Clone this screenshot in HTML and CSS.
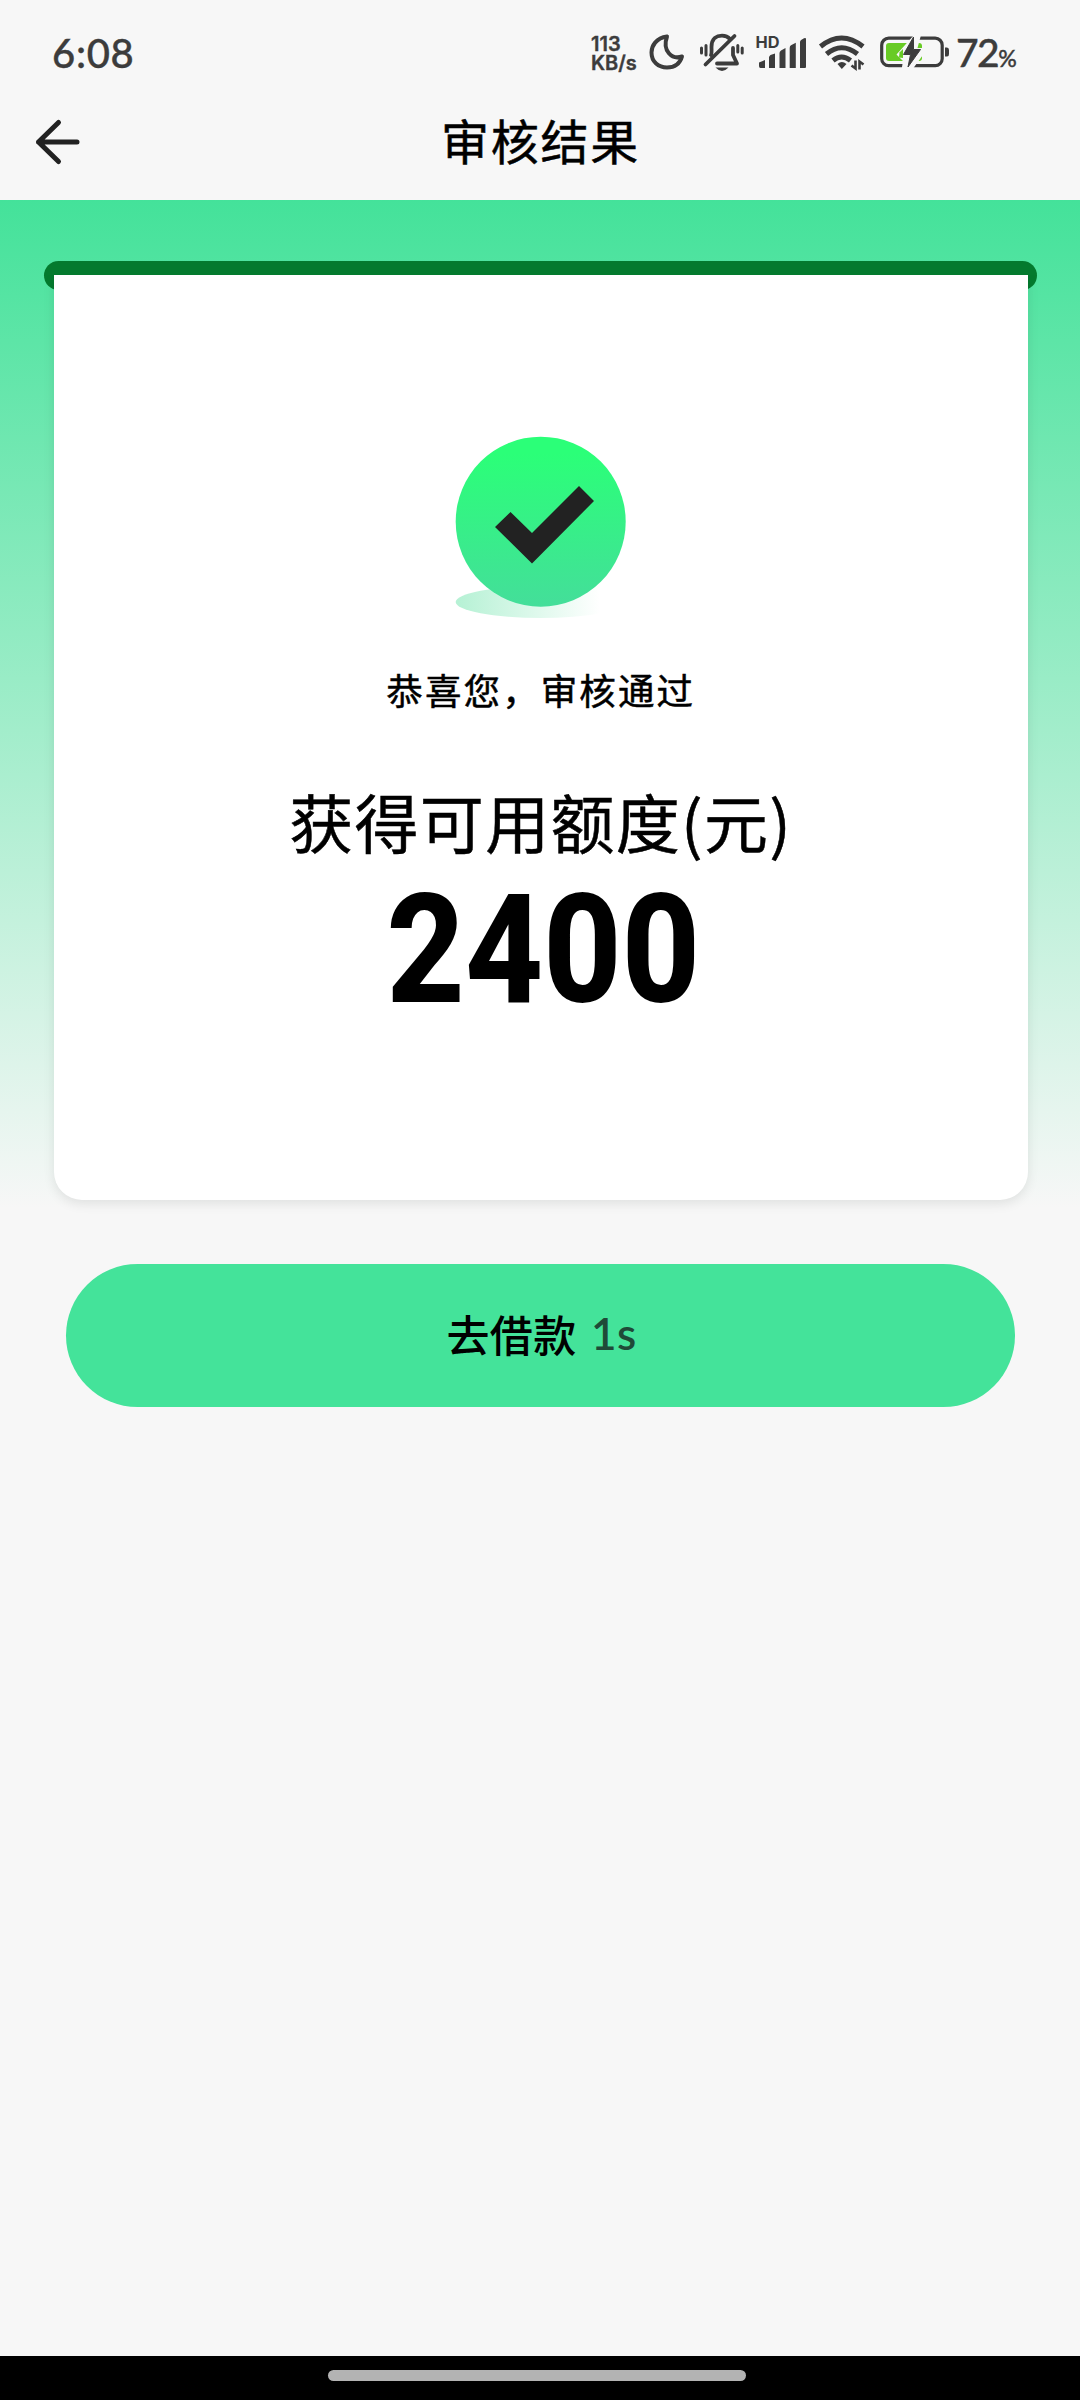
FILE: index.html
```html
<!DOCTYPE html>
<html lang="zh-CN">
<head>
<meta charset="utf-8">
<title>审核结果</title>
<link rel="stylesheet" href="styles.css">
</head>
<body>
<div class="screen">
  <div class="status">
    <div class="clock">6:08</div>
    <div class="indicators">
      <div class="rate"><span>113</span><span>KB/s</span></div>
      <svg class="moon" viewBox="645 28 50 48" width="50" height="48"><path d="M667 36.500C656 38 651.500 46 651.500 52.500C651.500 62 658.500 67.500 667 67.500C674.500 67.500 680 63.500 682 56.500C672 60 662 51 667 36.500Z" fill="none" stroke="#3c3c3c" stroke-width="4" stroke-linejoin="round"/></svg>
      <svg class="bell" viewBox="695 28 55 48" width="55" height="48"><g fill="none" stroke="#3c3c3c" stroke-width="3.800" stroke-linecap="round"><path d="M711 55C712 53 711.500 51 711.500 47C711.500 38 717 35.700 722 35.700C725 35.700 728 36.700 730 39"/><path d="M705.500 64.500L734.500 36"/><path d="M717 63.500H737L733 55V48" stroke-linejoin="round"/><path d="M706 45.500V55M701.500 48V53M737.800 45.500V52M742.200 48V53" stroke-width="3"/></g><path d="M715.500 67.500H728.500Q722 74.500 715.500 67.500Z" fill="#3c3c3c"/></svg>
      <svg class="signal" viewBox="750 28 62 48" width="62" height="48"><g fill="#3c3c3c"><text class="hd" x="755.500" y="48" textLength="24" lengthAdjust="spacingAndGlyphs">HD</text><path d="M759 62.500L765 60V68H760.500Q759 68 759 66ZM769 57.500Q769 56 770.500 55L775 53.500V68H769ZM779.500 53Q779.500 51.500 781 50.500L785.500 48V68H779.500ZM789.700 48Q789.700 46 791 45.300L795.800 42.800V68H789.700ZM800 42Q800 40.500 801.500 39.700L804 38.300Q806 37.500 806 39V67Q806 68 805 68H800Z"/></g></svg>
      <svg class="wifi" viewBox="812 28 58 48" width="58" height="48"><g fill="none" stroke="#3c3c3c" stroke-width="5"><path d="M820.500 46.500Q841.500 29.500 863 46.500"/><path d="M826.500 54Q841.500 41.500 857.500 54"/><path d="M833 60.500Q841.500 53.500 850.500 60.500"/></g><path d="M837.500 64Q841.800 60 846.500 64L841.800 69Z" fill="#3c3c3c"/><path d="M855.500 60.500V68.500L851.500 65.500M859.500 69.500V61.500L863.500 64.500" fill="none" stroke="#3c3c3c" stroke-width="2.600"/></svg>
      <svg class="battery" viewBox="870 28 84 48" width="84" height="48"><rect x="881.700" y="38.200" width="60.500" height="27.500" rx="7" fill="none" stroke="#3c3c3c" stroke-width="3.200"/><rect x="886" y="43" width="36" height="18" rx="3" fill="#68cb25"/><path d="M914 35L896.500 54.500L903 61L901.500 70H912L928 48H917.500L921 35Z" fill="#f7f7f7"/><path d="M913.500 37L903.500 54.500H910.500L908 67L920.500 49.500H913.500Z" fill="#3c3c3c" stroke="#3c3c3c"/><path d="M899.500 52.500L903 49V58L899 57.500Z" fill="#68cb25"/><path d="M945 47.500H947Q949 47.500 949 50V54Q949 56.500 947 56.500H945Z" fill="#3c3c3c"/></svg>
      <div class="percent">72<small>%</small></div>
    </div>
  </div>
  <header class="nav">
    <svg class="back" viewBox="0 0 50 50" width="50" height="50"><path d="M28.500 5.500L8.500 25L28.500 44.500M8.500 25H47" fill="none" stroke="#222" stroke-width="5" stroke-linecap="round" stroke-linejoin="round"/></svg>
    <h1>审核结果</h1>
  </header>
  <main class="result">
    <div class="slot">
      <section class="card">
        <svg class="badge" viewBox="455 436 172 184" width="172" height="184">
          <defs>
            <linearGradient id="disc" x1="0" y1="0" x2="0" y2="1"><stop offset=".1" stop-color="#2bff78"/><stop offset="1" stop-color="#44de9a"/></linearGradient>
            <linearGradient id="shade"><stop offset="0" stop-color="#b5f1d4"/><stop offset=".85" stop-color="#fff"/></linearGradient>
          </defs>
          <ellipse cx="540.700" cy="602" rx="85" ry="16" fill="url(#shade)"/>
          <circle cx="540.700" cy="521.700" r="85" fill="url(#disc)"/>
          <path d="M495 527L510.500 512L532 533L579 486L594 501L532 563.500Z" fill="#222"/>
        </svg>
        <p class="congrats">恭喜您，审核通过</p>
        <h2>获得可用额度(元)</h2>
        <div class="amount">2400</div>
      </section>
    </div>
  </main>
  <button class="borrow">去借款<span>1s</span></button>
  <footer class="homebar"><i></i></footer>
</div>
</body>
</html>
```
FILE: styles.css
```css
* { box-sizing: border-box; }
body { margin: 0; background: #f7f7f7; color: #000; font-family: "Noto Sans CJK SC", sans-serif; }
h1, h2, p { margin: 0; font-weight: 400; white-space: nowrap; -webkit-text-stroke: .5px #000; }
svg { display: block; flex: none; }

.screen { width: 1080px; height: 2400px; display: flex; flex-direction: column; }

.status { height: 104px; flex: none; display: flex; justify-content: space-between; padding: 28px 62px 0 52px; font-family: Lato, sans-serif; font-weight: 500; color: #3c3c3c; -webkit-text-stroke: .4px #3c3c3c; }
.clock { font-size: 40px; line-height: 50px; letter-spacing: .7px; }
.indicators { display: flex; }
.rate { width: 54px; display: flex; flex-direction: column; gap: 1px; padding-top: 7px; font: 600 20px/18px Inter, sans-serif; }
.hd { font: 700 16px Inter, sans-serif; }
.percent { width: 64px; padding-left: 2px; font-size: 39px; line-height: 49px; white-space: nowrap; letter-spacing: -1.5px; }
.percent small { font-size: 23px; }

.nav { height: 96px; flex: none; display: grid; grid-template-columns: 50px 1fr 50px; align-items: start; padding: 0 29px 0 30px; }
.back { margin-top: 13px; }
h1 { font-size: 48px; line-height: 70px; text-align: center; letter-spacing: 1.800px; }

.result { height: 1008px; flex: none; padding: 61px 43px 0 44px; background: linear-gradient(#44e29a, #f7f7f7); }
.slot { height: 29px; border-radius: 15px; background: #047a2e; padding: 14px 9.500px 0 10px; }
.card { height: 925px; background: #fff; border-radius: 0 0 28px 28px; box-shadow: 0 4px 12px rgba(0, 0, 0, .09); display: flex; flex-direction: column; align-items: center; padding-top: 161px; clip-path: inset(0 -20px -20px -20px); }
.congrats { margin-top: 40px; font-size: 36.500px; line-height: 60px; letter-spacing: 2.100px; }
h2 { margin-top: 55px; font-size: 64px; line-height: 90px; letter-spacing: 1.300px; }
.amount { margin: 15px 0 0 6px; font: 800 152px/140px Roboto, sans-serif; transform: scaleX(.894); }

.borrow { width: 949px; height: 143px; flex: none; margin: 56px auto 0 66px; border: 0; border-radius: 72px; background: #44e39a; color: #000; display: flex; align-items: center; justify-content: center; gap: 14px; padding: 0 5px 5px 7px; font: 500 43px/60px "Noto Sans CJK SC", sans-serif; letter-spacing: .5px; }
.borrow span { font: 600 44px/60px Lato, sans-serif; color: #1f4a38; }

.homebar { height: 44px; flex: none; margin-top: auto; background: #000; display: flex; justify-content: center; padding: 14px 6px 0 0; }
.homebar i { width: 418px; height: 11px; border-radius: 6px; background: #b3b3b3; }
```
